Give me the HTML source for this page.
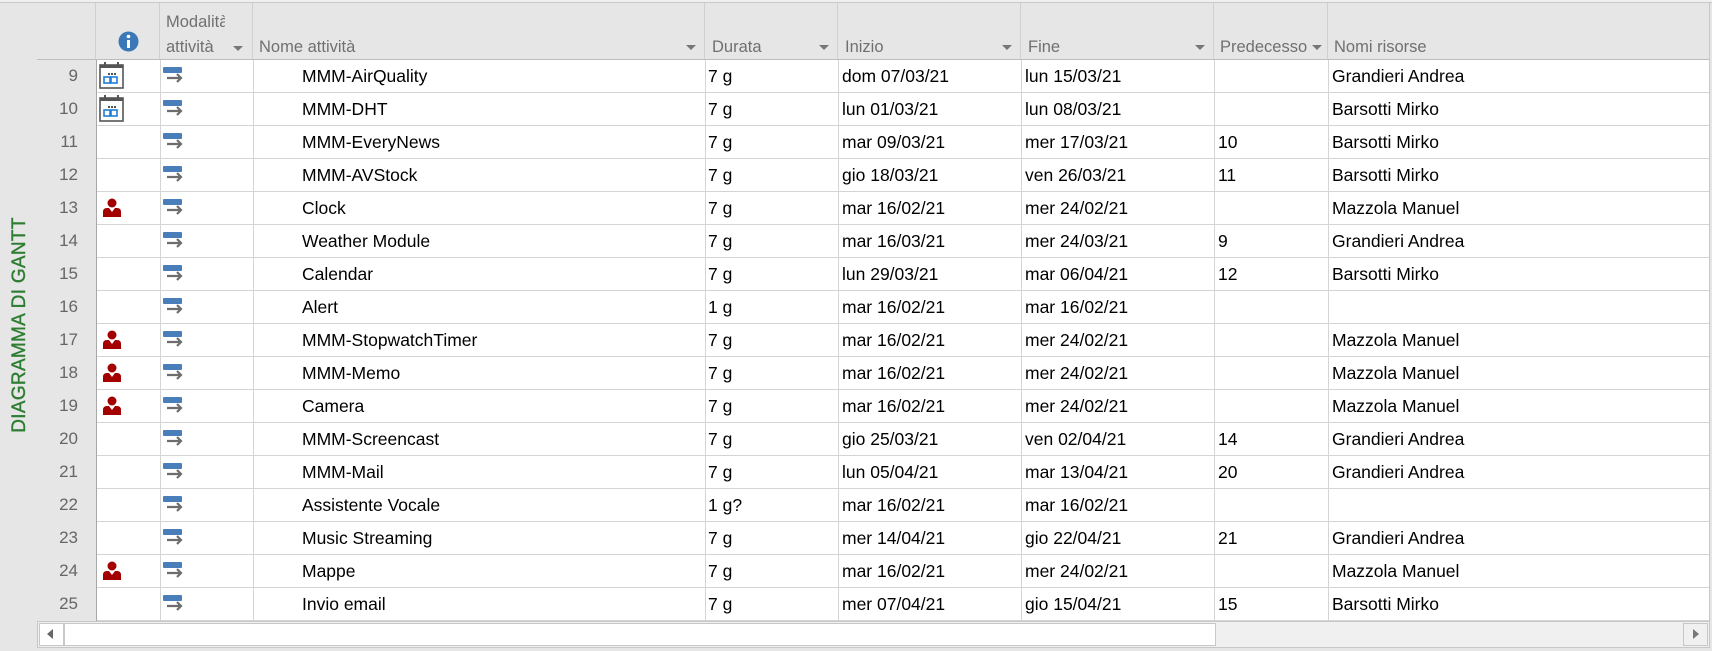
<!DOCTYPE html>
<html><head><meta charset="utf-8"><style>
*{margin:0;padding:0;box-sizing:border-box}
body{width:1712px;height:651px;background:#e6e6e6;position:relative;overflow:hidden;font-family:"Liberation Sans",sans-serif}
.a{position:absolute}
.hd{position:absolute;top:3px;height:57px;background:#e6e6e6;border-right:1px solid #d0d0d0}
.ht{position:absolute;color:#707070;font-size:16.5px;white-space:nowrap}
.dd{position:absolute;width:0;height:0;border-left:5px solid transparent;border-right:5px solid transparent;border-top:5px solid #777;top:45px}
.row{position:absolute;left:37px;width:1673px;height:33px;background:#fff;border-bottom:1px solid #d4d4d4}
.num{position:absolute;left:0;width:59px;height:33px;background:#e6e6e6;color:#666;font-size:17px;text-align:right;padding-right:18px;line-height:32px}
.c{position:absolute;top:0;height:33px;line-height:32px;font-size:17.5px;color:#000;white-space:nowrap}
.vl{position:absolute;top:0;height:621px;width:1px;background:#d4d4d4}
.bar{position:absolute;left:126px;top:7px;width:19px;height:6px;background:#4a7ebb;border-radius:1px}
.arr{position:absolute;left:130px;top:13px}
.per{position:absolute;left:65px;top:6px}
</style></head><body>
<div class="a" style="left:0;top:0;width:1712px;height:2px;background:#f0f0f0"></div>
<div class="a" style="left:0;top:2px;width:1712px;height:1px;background:#c8c8c8"></div>
<div class="hd" style="left:37px;width:59px"></div>
<div class="hd" style="left:96px;width:64px"></div>
<svg class="a" style="left:118px;top:31px" width="21" height="21"><circle cx="10.5" cy="10.5" r="10" fill="#3c78b8"/><rect x="9" y="9" width="3" height="8" fill="#fff"/><circle cx="10.5" cy="5.5" r="1.8" fill="#fff"/></svg>
<div class="hd" style="left:160px;width:93px;overflow:hidden"></div>
<div class="ht" style="left:166px;top:13px;width:59px;overflow:hidden">Modalità</div>
<div class="ht" style="left:166px;top:38px">attività</div>
<div class="dd" style="left:233px;top:46px"></div>
<div class="hd" style="left:253px;width:452px"></div>
<div class="ht" style="left:259px;top:38px">Nome attività</div>
<div class="dd" style="left:686px"></div>
<div class="hd" style="left:705px;width:133px"></div>
<div class="ht" style="left:712px;top:38px">Durata</div>
<div class="dd" style="left:819px"></div>
<div class="hd" style="left:838px;width:183px"></div>
<div class="ht" style="left:845px;top:38px">Inizio</div>
<div class="dd" style="left:1002px"></div>
<div class="hd" style="left:1021px;width:193px"></div>
<div class="ht" style="left:1028px;top:38px">Fine</div>
<div class="dd" style="left:1195px"></div>
<div class="hd" style="left:1214px;width:114px;overflow:hidden"></div>
<div class="ht" style="left:1220px;top:38px;width:87px;overflow:hidden">Predecessori</div>
<div class="dd" style="left:1312px"></div>
<div class="hd" style="left:1328px;width:382px"></div>
<div class="ht" style="left:1334px;top:38px">Nomi risorse</div>
<div class="a" style="left:37px;top:59px;width:1673px;height:1px;background:#bdbdbd"></div>
<div class="a" style="left:20px;top:325px;transform:translate(-50%,-50%) rotate(-90deg);color:#2e7d32;font-size:19px;white-space:nowrap;letter-spacing:0.3px;-webkit-text-stroke:0.4px #2e7d32">DIAGRAMMA DI GANTT</div>
<div id="rows"></div>
<div class="a" style="left:37px;top:621px;width:1673px;height:27px;background:#f0f0f0;border:1px solid #c8c8c8"></div>
<div class="a" style="left:39px;top:623px;width:25px;height:23px;background:#fff;border:1px solid #c8c8c8"></div>
<div class="a" style="left:47px;top:629px;width:0;height:0;border-top:5px solid transparent;border-bottom:5px solid transparent;border-right:6px solid #666"></div>
<div class="a" style="left:64px;top:623px;width:1152px;height:23px;background:#fff;border:1px solid #c8c8c8"></div>
<div class="a" style="left:1683px;top:623px;width:25px;height:23px;background:#f0f0f0;border:1px solid #c8c8c8"></div>
<div class="a" style="left:1693px;top:629px;width:0;height:0;border-top:5px solid transparent;border-bottom:5px solid transparent;border-left:6px solid #777"></div>
<script>
var d=[
["9","cal","MMM-AirQuality","7 g","dom 07/03/21","lun 15/03/21","","Grandieri Andrea"],
["10","cal","MMM-DHT","7 g","lun 01/03/21","lun 08/03/21","","Barsotti Mirko"],
["11","","MMM-EveryNews","7 g","mar 09/03/21","mer 17/03/21","10","Barsotti Mirko"],
["12","","MMM-AVStock","7 g","gio 18/03/21","ven 26/03/21","11","Barsotti Mirko"],
["13","p","Clock","7 g","mar 16/02/21","mer 24/02/21","","Mazzola Manuel"],
["14","","Weather Module","7 g","mar 16/03/21","mer 24/03/21","9","Grandieri Andrea"],
["15","","Calendar","7 g","lun 29/03/21","mar 06/04/21","12","Barsotti Mirko"],
["16","","Alert","1 g","mar 16/02/21","mar 16/02/21","",""],
["17","p","MMM-StopwatchTimer","7 g","mar 16/02/21","mer 24/02/21","","Mazzola Manuel"],
["18","p","MMM-Memo","7 g","mar 16/02/21","mer 24/02/21","","Mazzola Manuel"],
["19","p","Camera","7 g","mar 16/02/21","mer 24/02/21","","Mazzola Manuel"],
["20","","MMM-Screencast","7 g","gio 25/03/21","ven 02/04/21","14","Grandieri Andrea"],
["21","","MMM-Mail","7 g","lun 05/04/21","mar 13/04/21","20","Grandieri Andrea"],
["22","","Assistente Vocale","1 g?","mar 16/02/21","mar 16/02/21","",""],
["23","","Music Streaming","7 g","mer 14/04/21","gio 22/04/21","21","Grandieri Andrea"],
["24","p","Mappe","7 g","mar 16/02/21","mer 24/02/21","","Mazzola Manuel"],
["25","","Invio email","7 g","mer 07/04/21","gio 15/04/21","15","Barsotti Mirko"]];
var cal='<svg class="a" style="left:62px;top:2px" width="25" height="27"><rect x="1" y="3" width="23" height="23" fill="#fff" stroke="#555" stroke-width="1.6"/><rect x="1" y="3" width="23" height="3" fill="#555"/><rect x="5" y="0" width="2" height="5" fill="#555"/><rect x="18" y="0" width="2" height="5" fill="#555"/><rect x="9" y="11" width="2" height="2" fill="#555"/><rect x="12" y="11" width="2" height="2" fill="#555"/><rect x="15" y="11" width="2" height="2" fill="#555"/><rect x="5" y="15" width="6" height="6" fill="none" stroke="#1e7fd6" stroke-width="1.6"/><rect x="12" y="15" width="6" height="6" fill="none" stroke="#1e7fd6" stroke-width="1.6"/></svg>';
var per='<svg class="per" width="20" height="20"><circle cx="10" cy="5" r="4.5" fill="#a30000"/><path d="M1 19 L1 14 Q1 10 5 10 L7 10 L10 14 L13 10 L15 10 Q19 10 19 14 L19 19 Z" fill="#a30000"/></svg>';
var arr='<svg class="arr" width="20" height="10"><path d="M0 5 H14 M10 1 L14 5 L10 9" stroke="#6d6d6d" stroke-width="2.2" fill="none"/></svg>';
var h='';
d.forEach(function(r,i){
 var t=60+i*33;
 h+='<div class="row" style="top:'+t+'px"><div class="num">'+r[0]+'</div>'+(r[1]=='cal'?cal:r[1]=='p'?per:'')+'<div class="bar"></div>'+arr+
 '<div class="c" style="left:265px">'+r[2]+'</div><div class="c" style="left:671px">'+r[3]+'</div><div class="c" style="left:805px">'+r[4]+'</div><div class="c" style="left:988px">'+r[5]+'</div><div class="c" style="left:1181px">'+r[6]+'</div><div class="c" style="left:1295px">'+r[7]+'</div></div>';
});
[96,160,253,705,838,1021,1214,1328].forEach(function(x){h+='<div class="vl" style="left:'+x+'px;top:60px;height:561px"></div>'});
h+='<div class="vl" style="left:96px;top:60px;height:561px;background:#a8a8a8"></div>';
h+='<div class="vl" style="left:1709px;top:3px;height:620px;background:#c8c8c8"></div>';
document.getElementById('rows').innerHTML=h;
</script>
</body></html>
